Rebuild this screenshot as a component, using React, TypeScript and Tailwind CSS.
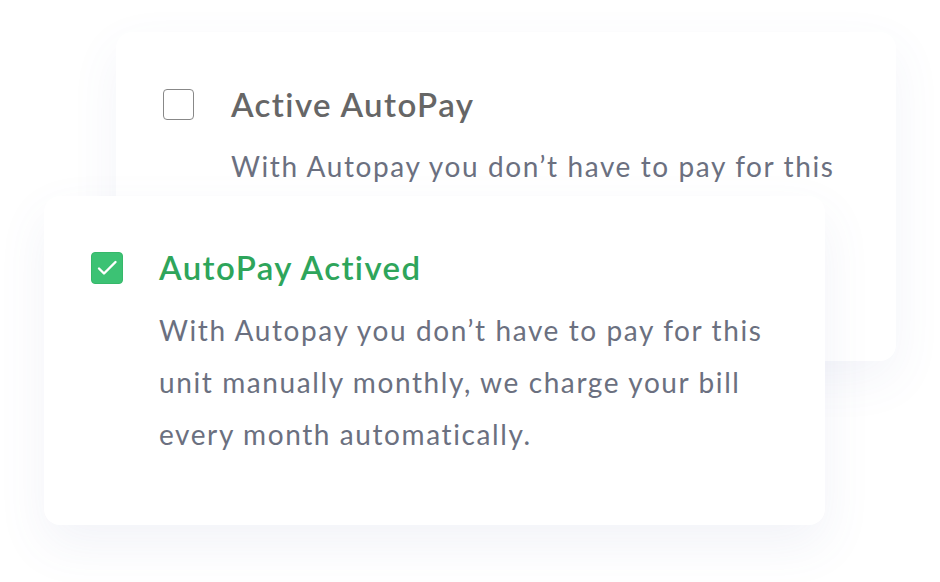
import React from "react";

function Check() {
  return (
    <svg width="26" height="26" viewBox="0 0 26 26" fill="none">
      <path d="M5 13.5l5 5L21.5 7" stroke="white" strokeWidth="2.4" strokeLinecap="round" strokeLinejoin="round" />
    </svg>
  );
}

export default function App() {
  return (
    <div className="w-[940px] h-[582px] bg-white overflow-hidden" style={{ fontFamily: "Lato, 'Noto Sans', sans-serif" }}>
      <div className="relative ml-[116px] mt-[32px] w-[780px] h-[329px] rounded-[16px] bg-white shadow-[0_18px_50px_rgba(90,100,170,0.07)]">
        <div className="flex items-start pl-[47px] pt-[57px]">
          <div className="w-[31px] h-[31px] rounded-[4px] border-[1.5px] border-[#888888] shrink-0" />
          <div className="ml-[37px]">
            <div className="text-[33px] leading-[31px] font-semibold text-[#666666] tracking-[1.4px]">Active AutoPay</div>
            <div className="mt-[20px] text-[28px] leading-[52px] text-[#6b7080] tracking-[1.6px]">With Autopay you don’t have to pay for this</div>
          </div>
        </div>
      </div>
      <div className="relative z-10 ml-[44px] mt-[-165px] w-[781px] h-[329px] rounded-[16px] bg-white shadow-[0_20px_50px_rgba(90,100,170,0.08)]">
        <div className="flex items-start pl-[47px] pt-[56px]">
          <div className="w-[32px] h-[32px] rounded-[4px] bg-[#3cc274] border border-[#36b86a] flex items-center justify-center shrink-0">
            <Check />
          </div>
          <div className="ml-[36px]">
            <div className="text-[33px] leading-[31px] font-semibold text-[#2ea55b] tracking-[1.4px]">AutoPay Actived</div>
            <div className="mt-[21px] text-[28px] leading-[52px] text-[#6b7080] tracking-[1.6px]">
              With Autopay you don’t have to pay for this
              <br />
              unit manually monthly, we charge your bill
              <br />
              every month automatically.
            </div>
          </div>
        </div>
      </div>
    </div>
  );
}
